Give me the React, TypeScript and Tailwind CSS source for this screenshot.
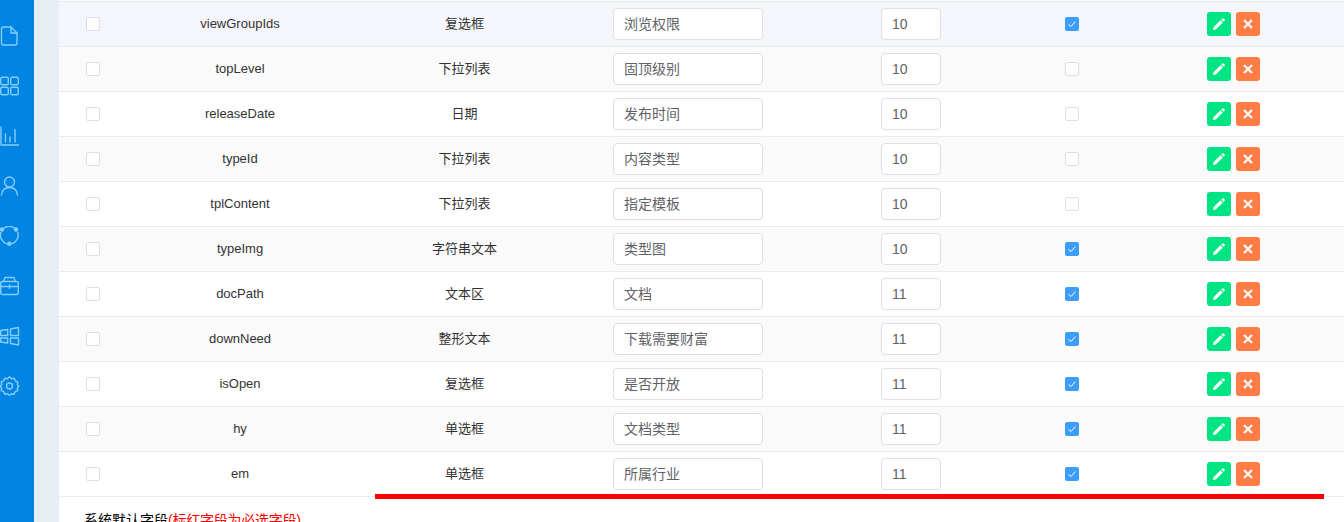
import React from 'react';

type Row = { name: string; type: string; label: string; order: string; checked: boolean };

const ROWS: Row[] = [
  { name: 'viewGroupIds', type: '复选框', label: '浏览权限', order: '10', checked: true },
  { name: 'topLevel', type: '下拉列表', label: '固顶级别', order: '10', checked: false },
  { name: 'releaseDate', type: '日期', label: '发布时间', order: '10', checked: false },
  { name: 'typeId', type: '下拉列表', label: '内容类型', order: '10', checked: false },
  { name: 'tplContent', type: '下拉列表', label: '指定模板', order: '10', checked: false },
  { name: 'typeImg', type: '字符串文本', label: '类型图', order: '10', checked: true },
  { name: 'docPath', type: '文本区', label: '文档', order: '11', checked: true },
  { name: 'downNeed', type: '整形文本', label: '下载需要财富', order: '11', checked: true },
  { name: 'isOpen', type: '复选框', label: '是否开放', order: '11', checked: true },
  { name: 'hy', type: '单选框', label: '文档类型', order: '11', checked: true },
  { name: 'em', type: '单选框', label: '所属行业', order: '11', checked: true },
];

const NavIcon = ({ children }: { children: React.ReactNode }) => (
  <div className="h-[50px] flex items-center">
    <svg width="20" height="20" viewBox="0 0 20 20" fill="none" stroke="#86cdfa" strokeWidth="1.4" strokeLinejoin="round" strokeLinecap="round">
      {children}
    </svg>
  </div>
);

const Sidebar = () => (
  <aside className="w-[34px] shrink-0 bg-[#0084e4] pt-[11px] overflow-hidden">
    <NavIcon>
      <path d="M1.500 3a2 2 0 0 1 2-2h7.500l6 6v10a2 2 0 0 1-2 2h-11.500a2 2 0 0 1-2-2z" />
      <path d="M11 1v6h6" />
    </NavIcon>
    <NavIcon>
      <rect x="0.700" y="1.200" width="7.600" height="7.600" rx="1.500" />
      <rect x="10.700" y="1.200" width="7.600" height="7.600" rx="1.500" />
      <rect x="0.700" y="11.200" width="7.600" height="7.600" rx="1.500" />
      <rect x="10.700" y="11.200" width="7.600" height="7.600" rx="1.500" />
    </NavIcon>
    <NavIcon>
      <path d="M1 1v18h17.500" />
      <path d="M5.500 8v8M10 11v5M15 3.500v12.500" />
    </NavIcon>
    <NavIcon>
      <circle cx="9.500" cy="6" r="5" />
      <path d="M1.500 19c.5-4.500 3.500-7.500 8-7.500s7.500 3 8 7.500" />
    </NavIcon>
    <NavIcon>
      <path d="M3.500 2.500a9 9 0 0 1 11.500 0M17.800 6.500a9 9 0 0 1-6.300 11.300M7 17.800a9 9 0 0 1-6.200-11.300" />
      <circle cx="2" cy="3.500" r="1.500" fill="#86cdfa" />
      <circle cx="16" cy="3.500" r="1.500" fill="#86cdfa" />
      <circle cx="9.300" cy="17.800" r="1.500" fill="#86cdfa" />
    </NavIcon>
    <NavIcon>
      <rect x="0.700" y="5.500" width="17.600" height="13" rx="1.800" />
      <path d="M3.500 5.500l1.500-4h9l1.500 4M0.700 10.500h17.600M9.500 9v3.500" />
    </NavIcon>
    <NavIcon>
      <path d="M0.700 4.500l7-1v6h-7zM10.500 3l8-1.500v8h-8zM0.700 12h7v5l-7-1zM10.500 12h8v7l-8-1.500z" />
    </NavIcon>
    <NavIcon>
      <path d="M9.500 0.800l2 1.900 2.700-.5 1 2.600 2.600 1-.5 2.700 1.500 1.500-1.500 2 .5 2.700-2.600 1-1 2.600-2.700-.5-2 1.400-2-1.400-2.700.5-1-2.600-2.600-1 .5-2.700-1.500-2 1.500-1.500-.5-2.700 2.600-1 1-2.600 2.700.5z" />
      <circle cx="9.500" cy="10" r="3" />
    </NavIcon>
  </aside>
);

const CheckBox = ({ checked = false }: { checked?: boolean }) =>
  checked ? (
    <span className="w-[14px] h-[14px] rounded-[2px] bg-[#3d9dfb] flex items-center justify-center">
      <svg width="10" height="10" viewBox="0 0 10 10" fill="none" stroke="#fff" strokeWidth="1">
        <path d="M1.500 5.500l2.500 2 4.500-5" />
      </svg>
    </span>
  ) : (
    <span className="w-[14px] h-[14px] rounded-[2px] bg-white border border-[#dcdfe6]" />
  );

const TableRow = ({ row, index }: { row: Row; index: number }) => {
  // first row is the hovered one in the shot, then zebra
  const bg = index === 0 ? 'bg-[#f5f6fb]' : index % 2 === 1 ? 'bg-[#fafafa]' : 'bg-white';
  return (
    <div className={`grid grid-cols-[68px_226px_223px_281px_104px_222px_161px] items-center h-[45px] border-b border-[#e9ecf3] text-[13px] text-[#333] ${bg}`}>
      <div className="flex justify-center"><CheckBox /></div>
      <div className="text-center">{row.name}</div>
      <div className="text-center">{row.type}</div>
      <div className="pl-[37px]">
        <div className="w-[150px] h-[32px] rounded-[4px] bg-white border border-[#dcdfe6] px-[10px] flex items-center text-[14px] text-[#606266]">{row.label}</div>
      </div>
      <div className="pl-[24px]">
        <div className="w-[60px] h-[32px] rounded-[4px] bg-white border border-[#dcdfe6] px-[10px] flex items-center text-[14px] text-[#606266]">{row.order}</div>
      </div>
      <div className="flex justify-center"><CheckBox checked={row.checked} /></div>
      <div className="pl-[24px] flex gap-[5px]">
        <button className="w-[24px] h-[24px] rounded-[3px] bg-[#00e483] flex items-center justify-center">
          <svg width="14" height="14" viewBox="0 0 14 14" fill="#fff">
            <path d="M1.500 10.200l7-7 2.300 2.300-7 7-2.800.5zM9.300 2.500l1.100-1.100a.8.8 0 0 1 1.100 0l1.200 1.200a.8.8 0 0 1 0 1.100l-1.100 1.100z" />
          </svg>
        </button>
        <button className="w-[24px] h-[24px] rounded-[3px] bg-[#ff7d44] flex items-center justify-center">
          <svg width="12" height="12" viewBox="0 0 12 12" fill="none" stroke="#fff" strokeWidth="2.200">
            <path d="M2 2l8 8M10 2l-8 8" />
          </svg>
        </button>
      </div>
    </div>
  );
};

const App: React.FC = () => {
  return (
    <div className="relative flex h-[522px] w-[1344px] overflow-hidden bg-white font-['Liberation_Sans','Noto_Sans_CJK_SC',sans-serif]">
      <Sidebar />
      <div className="w-[25px] shrink-0 bg-[#e9edf4]" />
      <main className="flex-1 bg-white">
        <div className="h-px bg-[#fafafa]" />
        <div className="border-t border-[#e9ecf3]">
          {ROWS.map((row, i) => (
            <TableRow key={row.name} row={row} index={i} />
          ))}
        </div>
        <div className="pl-[25px] pt-[13px] text-[14px] leading-[20px] text-black">
          系统默认字段<span className="text-[#ff0000] tracking-[-0.25px]">(标红字段为必选字段)</span>
        </div>
      </main>
      {/* red annotation line drawn over the table */}
      <div className="absolute left-[375px] top-[494px] w-[949px] h-[5px] bg-[#ff0000]" />
    </div>
  );
};

export default App;
